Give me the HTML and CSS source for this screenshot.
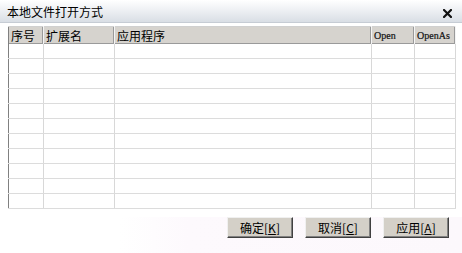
FILE: index.html
```html
<!DOCTYPE html>
<html>
    <head>
        <meta charset="utf-8">
        <title>本地文件打开方式</title>
        <link rel="stylesheet" href="styles.css">
    </head>
    <body>
        <div class="dialog">
            <div class="titlebar">
                <span class="title">本地文件打开方式</span>
                <svg class="close" width="9" height="9" viewBox="0 0 9 9">
                    <path d="M1 1 L8 8 M8 1 L1 8" stroke="#111" stroke-width="2.2" stroke-linecap="square"/>
                </svg>
            </div>

            <div class="grid-wrap">
                <table class="grid">
                    <colgroup>
                        <col class="c-no">
                        <col class="c-ext">
                        <col class="c-app">
                        <col class="c-open">
                        <col class="c-openas">
                    </colgroup>
                    <thead>
                        <tr>
                            <th>序号</th>
                            <th>扩展名</th>
                            <th>应用程序</th>
                            <th class="latin">Open</th>
                            <th class="latin">OpenAs</th>
                        </tr>
                    </thead>
                    <tbody>
                        <tr><td></td><td></td><td></td><td></td><td></td></tr>
                        <tr><td></td><td></td><td></td><td></td><td></td></tr>
                        <tr><td></td><td></td><td></td><td></td><td></td></tr>
                        <tr><td></td><td></td><td></td><td></td><td></td></tr>
                        <tr><td></td><td></td><td></td><td></td><td></td></tr>
                        <tr><td></td><td></td><td></td><td></td><td></td></tr>
                        <tr><td></td><td></td><td></td><td></td><td></td></tr>
                        <tr><td></td><td></td><td></td><td></td><td></td></tr>
                        <tr><td></td><td></td><td></td><td></td><td></td></tr>
                        <tr><td></td><td></td><td></td><td></td><td></td></tr>
                        <tr><td></td><td></td><td></td><td></td><td></td></tr>
                    </tbody>
                </table>
            </div>

            <div class="button-row">
                <button>确定[<u>K</u>]</button>
                <button>取消[<u>C</u>]</button>
                <button>应用[<u>A</u>]</button>
            </div>
        </div>
    </body>
</html>
```

FILE: styles.css
```css
* {
    margin: 0;
    padding: 0;
    box-sizing: border-box;
}

body {
    width: 462px;
    height: 253px;
    background: #fff;
    font-family: "Noto Sans CJK SC", "Liberation Sans", sans-serif;
    font-size: 12px;
    color: #000;
    overflow: hidden;
}

.dialog {
    display: flex;
    flex-direction: column;
    height: 100%;
}

.titlebar {
    height: 23px;
    display: flex;
    align-items: center;
    justify-content: space-between;
    padding: 0 10px 0 7px;
    background: linear-gradient(to bottom, #ffffff 0%, #f0f2f5 40%, #d9dee5 100%);
    border-bottom: 1px solid #c6ccd4;
}

.title {
    font-size: 12px;
    line-height: 1;
    margin-top: 1px;
}

.close {
    display: block;
    margin-top: 4px;
}

.grid-wrap {
    margin: 3px 0 0 8px;
    width: 447px;
}

.grid {
    border-collapse: collapse;
    table-layout: fixed;
    width: 447px;
    border-left: 1px solid #808080;
    border-bottom: 1px solid #c8c8c8;
}

.c-no { width: 35px; }
.c-ext { width: 71px; }
.c-app { width: 257px; }
.c-open { width: 43px; }
.c-openas { width: 41px; }

.grid th {
    height: 17px;
    background: #d6d3ce;
    font-weight: normal;
    text-align: left;
    padding: 0 0 0 2px;
    border-right: 1px solid #f4f4f4;
    border-top: 1px solid #d0d0d0;
    box-shadow: inset -1px 0 0 #9a9a9a, inset 0 -1px 0 #9a9a9a;
    line-height: 15px;
    white-space: nowrap;
    overflow: hidden;
}

.grid th.latin {
    font-family: "Liberation Serif", "DejaVu Serif", serif;
    font-size: 10px;
    color: #111;
    -webkit-text-stroke: 0.2px #111;
}

.grid td {
    height: 15px;
    border-right: 1px solid #d8d8d8;
    border-bottom: 1px solid #dcdcdc;
}

.button-row {
    display: flex;
    justify-content: flex-end;
    gap: 12px;
    margin: 8px 0 0 120px;
    padding: 0 13px 15px 0;
    background: linear-gradient(to right, #fff 0%, #fdf9fd 20%, #fcf8fc 100%);
    flex: 1;
    align-items: flex-start;
}

button {
    width: 66px;
    height: 21px;
    background: #d4d0c8;
    border: 1px solid;
    border-color: #f0f0f0 #404040 #404040 #f0f0f0;
    box-shadow: inset -1px -1px 0 #808080;
    font-family: "Noto Sans CJK SC", "Liberation Sans", sans-serif;
    font-size: 12px;
    line-height: 1;
    color: #000;
}

button u {
    text-decoration-thickness: 1px;
}
```
